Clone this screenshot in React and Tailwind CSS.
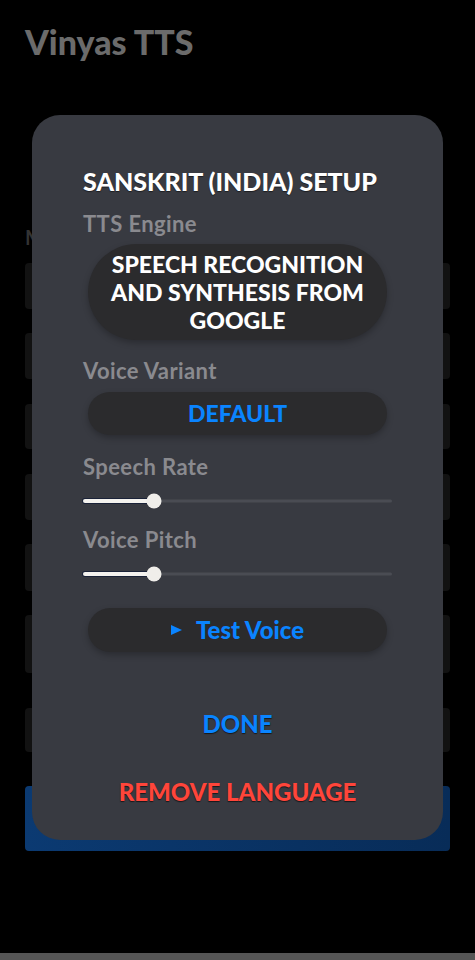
import React from "react";

function Slider({ pct }) {
  return (
    <div className="relative h-4 w-full">
      <div className="absolute left-0 right-0 top-1/2 h-[3px] -translate-y-1/2 rounded-full bg-[#4a4c53]" />
      <div
        className="absolute left-0 top-1/2 h-[4px] -translate-y-1/2 rounded-full bg-[#f4f2ee] shadow-[0_0_0_1px_#1a2238]"
        style={{ width: `${pct}%` }}
      />
      <div
        className="absolute top-1/2 h-[15px] w-[15px] -translate-x-1/2 -translate-y-1/2 rounded-full bg-[#f0eeea]"
        style={{ left: `${pct}%` }}
      />
    </div>
  );
}

function Label({ children, className = "" }) {
  return (
    <div className={`text-[22px] font-bold leading-[24px] tracking-[0.4px] text-[#8a8a8f] ${className}`}>
      {children}
    </div>
  );
}

export default function App() {
  const font = { fontFamily: "Lato, 'Open Sans', sans-serif" };
  return (
    <div className="relative h-[960px] w-[475px] overflow-hidden bg-black" style={font}>
      {/* background page */}
      <div className="flex flex-col px-[25px] pt-[22px]">
        <div className="text-[34px] font-black leading-[40px] text-[#6b6b6b]">Vinyas TTS</div>
        <div className="mt-[163px] text-[20px] font-bold leading-[24px] text-[#333]">My Languages</div>
        <div className="mt-[14px] flex flex-col">
          <div className="h-[46px] rounded bg-[#121212]" />
          <div className="mt-[24px] h-[46px] rounded bg-[#121212]" />
          <div className="mt-[25px] h-[45px] rounded bg-[#121212]" />
          <div className="mt-[25px] h-[46px] rounded bg-[#121212]" />
          <div className="mt-[24px] h-[47px] rounded bg-[#121212]" />
          <div className="mt-[24px] h-[58px] rounded bg-[#121212]" />
          <div className="mt-[35px] h-[44px] rounded bg-[#121212]" />
          <div className="mt-[34px] h-[65px] rounded bg-gradient-to-r from-[#0b3a72] to-[#082c58]" />
        </div>
      </div>
      <div className="absolute bottom-0 left-0 right-0 h-[7px] bg-[#555]" />

      {/* modal */}
      <div className="absolute inset-0 flex justify-center pt-[115px]">
        <div className="flex h-[725px] w-[411px] flex-col rounded-[28px] bg-[#383a41] px-[51px] pt-[51px]">
          <div className="text-[25px] font-black leading-[30px] text-white [text-shadow:0_1px_1px_rgba(0,0,0,0.5)]">
            SANSKRIT (INDIA) SETUP
          </div>
          <Label className="mt-[16px]">TTS Engine</Label>
          <div className="mx-[5px] mt-[8px] flex h-[96px] items-center justify-center rounded-full bg-[#2b2b2d] text-center shadow-[0_3px_6px_rgba(0,0,0,0.25)]">
            <div className="text-[23px] font-black leading-[28px] text-white">
              SPEECH RECOGNITION
              <br />
              AND SYNTHESIS FROM
              <br />
              GOOGLE
            </div>
          </div>
          <Label className="mt-[19px]">Voice Variant</Label>
          <div className="mx-[5px] mt-[9px] flex h-[43px] items-center justify-center rounded-full bg-[#2b2b2d] shadow-[0_3px_6px_rgba(0,0,0,0.25)]">
            <span className="text-[23px] font-black text-[#0a84ff]">DEFAULT</span>
          </div>
          <Label className="mt-[20px]">Speech Rate</Label>
          <div className="mt-[14px]">
            <Slider pct={23} />
          </div>
          <Label className="mt-[19px]">Voice Pitch</Label>
          <div className="mt-[14px]">
            <Slider pct={23} />
          </div>
          <div className="mx-[5px] mt-[26px] flex h-[44px] items-center justify-center gap-[14px] rounded-full bg-[#2b2b2d] shadow-[0_3px_6px_rgba(0,0,0,0.25)]">
            <svg width="11" height="10" viewBox="0 0 11 10">
              <polygon points="0,0 11,5 0,10" fill="#0a84ff" />
            </svg>
            <span className="text-[24px] font-black leading-[30px] text-[#0a84ff]">Test Voice</span>
          </div>
          <div className="mt-[57px] text-center text-[24px] font-black leading-[30px] text-[#0a84ff] [text-shadow:0_1px_1px_rgba(0,0,0,0.6)]">
            DONE
          </div>
          <div className="mt-[38px] text-center text-[24px] font-black leading-[30px] text-[#ff453a] [text-shadow:0_1px_1px_rgba(0,0,0,0.6)]">
            REMOVE LANGUAGE
          </div>
        </div>
      </div>
    </div>
  );
}
